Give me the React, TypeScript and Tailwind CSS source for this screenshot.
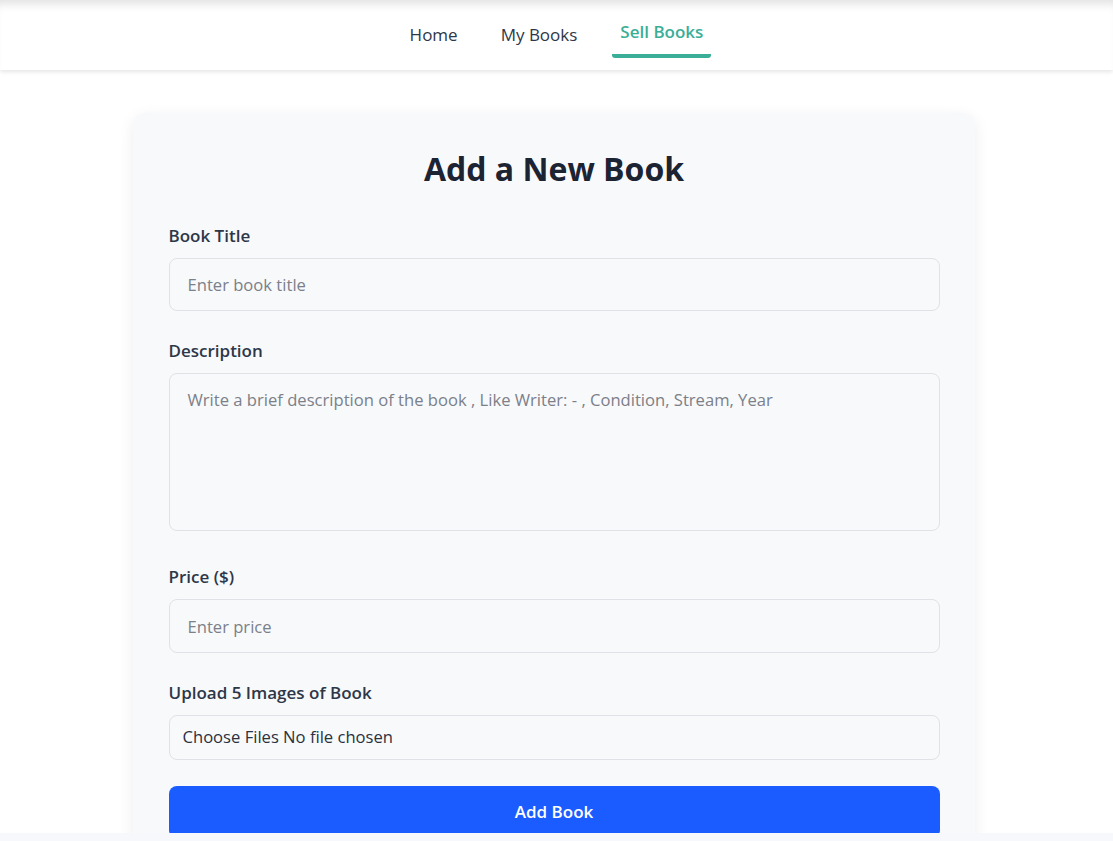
import React from 'react';

const font = { fontFamily: '"Open Sans", "Noto Sans", sans-serif' };

const NavLink: React.FC<{ label: string; active?: boolean }> = ({ label, active }) => (
  <a
    href="#"
    className={
      active
        ? 'self-start mt-[20px] px-2 pb-[10px] leading-6 border-b-4 border-[#3aae97] rounded-[3px] text-[#3aae97] font-semibold text-[17px]'
        : 'px-2 leading-6 text-[#2d3748] text-[17px]'
    }
  >
    {label}
  </a>
);

export default function App() {
  return (
    <div className="h-[841px] w-full overflow-hidden bg-white flex flex-col" style={font}>
      <nav className="h-[70px] shrink-0 bg-white flex items-center justify-center gap-[27px] shadow-[0_2px_4px_rgba(0,0,0,0.1),inset_0_10px_10px_-6px_rgba(0,0,0,0.12)] relative z-10">
        <NavLink label="Home" />
        <NavLink label="My Books" />
        <NavLink label="Sell Books" active />
      </nav>

      <main className="flex-1 overflow-hidden flex justify-center pt-[43px] pr-[6px]">
        <div className="w-[842px] bg-[#f8f9fb] rounded-xl shadow-[0_4px_16px_rgba(0,0,0,0.07)] pl-9 pr-[35px] pt-9 pb-10 h-fit">
          <h1 className="text-[32px] leading-10 font-bold text-center text-[#1c2333] mb-[35px]">Add a New Book</h1>

          <form className="flex flex-col" onSubmit={e => e.preventDefault()}>
            <label className="block text-[17px] leading-6 font-semibold text-[#2d3748] mb-[10px]">Book Title</label>
            <input
              type="text"
              placeholder="Enter book title"
              className="block w-full h-[53px] px-[18px] rounded-lg border border-[#dfe2e6] bg-[#f8f9fb] text-[16.6px] placeholder:text-[#7b8089] outline-none mb-7"
            />

            <label className="block text-[17px] leading-6 font-semibold text-[#2d3748] mb-[10px]">Description</label>
            <textarea
              placeholder="Write a brief description of the book , Like Writer: - , Condition, Stream, Year"
              className="block w-full h-[158px] px-[18px] py-[14px] rounded-lg border border-[#dfe2e6] bg-[#f8f9fb] text-[16.6px] leading-6 placeholder:text-[#7b8089] outline-none resize-none mb-[34px]"
            />

            <label className="block text-[17px] leading-6 font-semibold text-[#2d3748] mb-[10px]">Price ($)</label>
            <input
              type="text"
              placeholder="Enter price"
              className="block w-full h-[54px] px-[18px] rounded-lg border border-[#dfe2e6] bg-[#f8f9fb] text-[16.6px] placeholder:text-[#7b8089] outline-none mb-[28px]"
            />

            <label className="block text-[17px] leading-6 font-semibold text-[#2d3748] mb-[10px]">Upload 5 Images of Book</label>
            <div className="w-full h-[45px] px-[13px] flex items-center rounded-lg border border-[#dfe2e6] bg-[#f8f9fb] text-[16.6px] text-[#2a3140] mb-[26px]">
              Choose Files No file chosen
            </div>

            <button
              type="submit"
              className="w-full h-[52px] rounded-lg bg-[#1a5cff] text-white text-[17px] font-semibold"
            >
              Add Book
            </button>
          </form>
        </div>
      </main>

      <div className="h-2 shrink-0 bg-[#f7f8fc]" />
    </div>
  );
}
